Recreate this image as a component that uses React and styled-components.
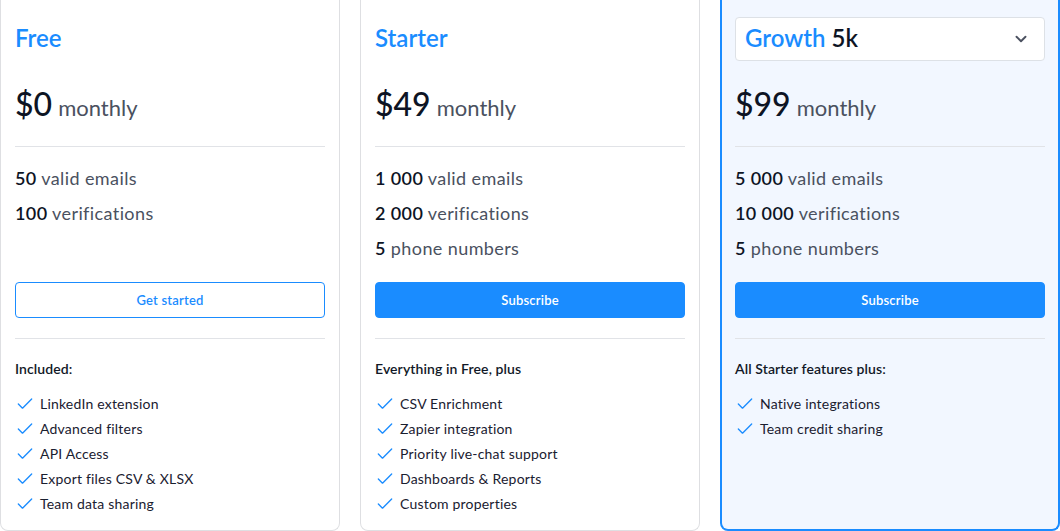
import React from "react";
import styled, { createGlobalStyle } from "styled-components";
import { Check, ChevronDown } from "lucide-react";

const GlobalStyle = createGlobalStyle`
	body {
		margin: 0;
		background: #ffffff;
		font-family: "Lato", "Open Sans", sans-serif;
		color: #111827;
	}
`;

const Plans = styled.div`
	display: grid;
	grid-template-columns: repeat(3, 340px);
	gap: 20px;
	width: 1060px;
	height: 531px;
	overflow: hidden;
`;

const Card = styled.div`
	box-sizing: border-box;
	height: 531px;
	padding: 17px ${(p) => (p.$featured ? "13px" : "14px")} 0;
	background: ${(p) => (p.$featured ? "#f2f7ff" : "#ffffff")};
	border: ${(p) => (p.$featured ? "2px solid #1a8cff" : "1px solid #dedfe2")};
	border-top: none;
	border-radius: 0 0 8px 8px;
	display: flex;
	flex-direction: column;
`;

const Header = styled.div`
	height: 44px;
	display: flex;
	align-items: center;
`;

const Title = styled.span`
	font-size: 24px;
	font-weight: 600;
	line-height: 1;
	padding-bottom: 3px;
	color: #1a8cff;
`;

const Select = styled.div`
	box-sizing: border-box;
	width: 100%;
	height: 44px;
	padding: 0 14px 0 9px;
	display: flex;
	align-items: center;
	justify-content: space-between;
	background: #ffffff;
	border: 1px solid #dde1e6;
	border-radius: 4px;
`;

const Size = styled.span`
	color: #0d1424;
	margin-left: 6px;
`;

const Price = styled.div`
	margin-top: 21px;
	height: 44px;
	line-height: 44px;
	font-size: 32px;
	font-weight: 500;
	color: #0d1424;
`;

const Period = styled.span`
	font-size: 22px;
	font-weight: 400;
	color: #4a5160;
	margin-left: 6px;
`;

const Divider = styled.hr`
	margin: 20px 0 0;
	border: none;
	border-top: 1px solid #e1e3e7;
`;

const Stats = styled.div`
	padding: 14px 0 16px;
	min-height: 105px;
`;

const Stat = styled.div`
	font-size: 18px;
	line-height: 35px;
	letter-spacing: 0.4px;
	color: #4a5160;

	b {
		font-weight: 600;
		color: #0d1424;
	}
`;

const Button = styled.button`
	box-sizing: border-box;
	height: 36px;
	width: 100%;
	border-radius: 4px;
	font-family: inherit;
	font-size: 13px;
	font-weight: 600;
	letter-spacing: 0.2px;
	cursor: pointer;
	border: 1px solid #1a8cff;
	background: ${(p) => (p.$outline ? "#ffffff" : "#1a8cff")};
	color: ${(p) => (p.$outline ? "#1a8cff" : "#ffffff")};
`;

const FeatureHead = styled.div`
	margin-top: 20px;
	font-size: 14px;
	line-height: 20px;
	font-weight: 600;
	letter-spacing: 0.1px;
	color: #111827;
`;

const Features = styled.ul`
	list-style: none;
	margin: 12px 0 0;
	padding: 0;
`;

const Feature = styled.li`
	display: flex;
	align-items: center;
	gap: 5px;
	height: 25px;
	font-size: 14px;
	letter-spacing: 0.2px;
	color: #1a2030;

	svg {
		flex: none;
	}
`;

const plans = [
	{
		name: "Free",
		price: "$0",
		stats: [
			["50", "valid emails"],
			["100", "verifications"],
		],
		button: "Get started",
		outline: true,
		head: "Included:",
		features: [
			"LinkedIn extension",
			"Advanced filters",
			"API Access",
			"Export files CSV & XLSX",
			"Team data sharing",
		],
	},
	{
		name: "Starter",
		price: "$49",
		stats: [
			["1 000", "valid emails"],
			["2 000", "verifications"],
			["5", "phone numbers"],
		],
		button: "Subscribe",
		head: "Everything in Free, plus",
		features: [
			"CSV Enrichment",
			"Zapier integration",
			"Priority live-chat support",
			"Dashboards & Reports",
			"Custom properties",
		],
	},
	{
		name: "Growth",
		size: "5k",
		featured: true,
		price: "$99",
		stats: [
			["5 000", "valid emails"],
			["10 000", "verifications"],
			["5", "phone numbers"],
		],
		button: "Subscribe",
		head: "All Starter features plus:",
		features: ["Native integrations", "Team credit sharing"],
	},
];

function PlanCard({ plan }) {
	return (
		<Card $featured={plan.featured}>
			<Header>
				{plan.size ? (
					<Select>
						<Title>
							{plan.name}
							<Size>{plan.size}</Size>
						</Title>
						<ChevronDown size={18} strokeWidth={2.5} color="#4b5160" />
					</Select>
				) : (
					<Title>{plan.name}</Title>
				)}
			</Header>
			<Price>
				{plan.price}
				<Period>monthly</Period>
			</Price>
			<Divider />
			<Stats>
				{plan.stats.map(([num, label]) => (
					<Stat key={label}>
						<b>{num}</b> {label}
					</Stat>
				))}
			</Stats>
			<Button $outline={plan.outline}>{plan.button}</Button>
			<Divider />
			<FeatureHead>{plan.head}</FeatureHead>
			<Features>
				{plan.features.map((f) => (
					<Feature key={f}>
						<Check size={20} strokeWidth={1.6} color="#1a8cff" />
						{f}
					</Feature>
				))}
			</Features>
		</Card>
	);
}

export default function App() {
	return (
		<>
			<GlobalStyle />
			<Plans>
				{plans.map((p) => (
					<PlanCard key={p.name} plan={p} />
				))}
			</Plans>
		</>
	);
}
